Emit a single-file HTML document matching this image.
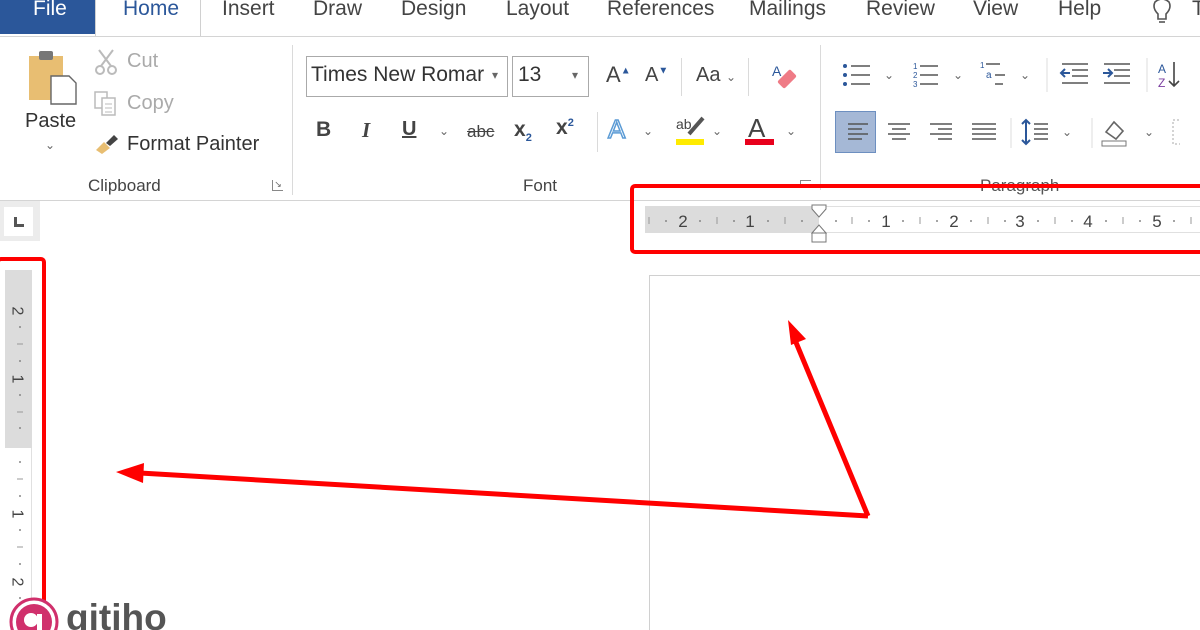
<!DOCTYPE html>
<html><head><meta charset="utf-8">
<style>
*{margin:0;padding:0;box-sizing:border-box}
html{width:1200px;height:630px;overflow:hidden}
body{width:1200px;height:630px;overflow:hidden;background:#fff;font-family:"Liberation Sans",sans-serif;color:#444;position:relative}
.a{position:absolute;white-space:nowrap}
.tab{position:absolute;top:-3px;font-size:21px;color:#444}
.lbl{font-size:20px;color:#333}
.grp{font-size:17px;color:#444}
.dd{font-size:12px;color:#666}
.sep{position:absolute;width:1px;background:#dadada}
.rn{position:absolute;font-size:16px;color:#444}
</style></head><body>
<!-- tab bar -->
<div class="a" style="left:0;top:0;width:103px;height:34px;background:#2b579a"></div>
<div class="a" style="left:33px;top:-3px;font-size:21px;color:#fff">File</div>
<div class="a" style="left:95px;top:-2px;width:106px;height:39px;border:1px solid #d0d0d0;border-bottom:none;background:#fff"></div>
<div class="tab" style="left:123px;color:#2b579a">Home</div>
<div class="tab" style="left:222px">Insert</div>
<div class="tab" style="left:313px">Draw</div>
<div class="tab" style="left:401px">Design</div>
<div class="tab" style="left:506px">Layout</div>
<div class="tab" style="left:607px">References</div>
<div class="tab" style="left:749px">Mailings</div>
<div class="tab" style="left:866px">Review</div>
<div class="tab" style="left:973px">View</div>
<div class="tab" style="left:1058px">Help</div>
<svg class="a" style="left:1150px;top:0" width="24" height="26"><path d="M5 2 Q12 -4 19 2 Q22 8 16 14 L16 19 L8 19 L8 14 Q2 8 5 2Z" fill="none" stroke="#555" stroke-width="1.6"/><line x1="9" y1="22" x2="15" y2="22" stroke="#555" stroke-width="1.6"/></svg>
<div class="a" style="left:1192px;top:-3px;font-size:21px">T</div>
<div class="a" style="left:0;top:36px;width:1200px;height:1px;background:#d4d4d4"></div>

<!-- clipboard -->
<svg class="a" style="left:27px;top:48px" width="54" height="58">
<rect x="2" y="8" width="34" height="44" fill="#e8be72"/><rect x="12" y="3" width="14" height="9" rx="2" fill="#777"/>
<path d="M24 28 h18 l7 7 v21 h-25z" fill="#fff" stroke="#666" stroke-width="1.4"/></svg>
<div class="a lbl" style="left:25px;top:110px">Paste</div>
<div class="a dd" style="left:45px;top:138px">&#8964;</div>
<svg class="a" style="left:93px;top:48px" width="26" height="28"><path d="M6 2 L18 18 M20 2 L8 18" stroke="#bbb" stroke-width="2" fill="none"/><circle cx="7" cy="22" r="4" fill="none" stroke="#bbb" stroke-width="2"/><circle cx="19" cy="22" r="4" fill="none" stroke="#bbb" stroke-width="2"/></svg>
<div class="a lbl" style="left:127px;top:50px;color:#aaa">Cut</div>
<svg class="a" style="left:93px;top:90px" width="26" height="28"><rect x="2" y="2" width="12" height="16" fill="none" stroke="#bbb" stroke-width="1.5"/><rect x="9" y="8" width="13" height="17" fill="#fff" stroke="#bbb" stroke-width="1.5"/><path d="M12 14h7M12 18h7M12 22h7" stroke="#bbb"/></svg>
<div class="a lbl" style="left:127px;top:92px;color:#aaa">Copy</div>
<svg class="a" style="left:94px;top:132px" width="28" height="24"><path d="M2 18 L10 10 L16 16 L8 22Z" fill="#e8be72"/><path d="M12 11 L20 3 L24 7 L16 14Z" fill="#444"/></svg>
<div class="a lbl" style="left:127px;top:133px">Format Painter</div>
<div class="a grp" style="left:88px;top:176px">Clipboard</div>
<div class="a" style="left:272px;top:180px;width:11px;height:11px;border-left:1px solid #888;border-bottom:1px solid #888;font-size:9px;line-height:9px;color:#666;text-align:center">&#8600;</div>
<div class="sep" style="left:292px;top:45px;height:150px"></div>

<!-- font -->
<div class="a" style="left:306px;top:56px;width:202px;height:41px;border:1px solid #aaa"></div>
<div class="a" style="left:311px;top:63px;font-size:21px;color:#333">Times New Romar</div>
<div class="a dd" style="left:492px;top:68px">&#9662;</div>
<div class="a" style="left:512px;top:56px;width:77px;height:41px;border:1px solid #aaa"></div>
<div class="a" style="left:518px;top:63px;font-size:21px;color:#333">13</div>
<div class="a dd" style="left:572px;top:68px">&#9662;</div>
<div class="a" style="left:606px;top:62px;font-size:22px">A<sup style="font-size:10px;color:#2b579a">&#9650;</sup></div>
<div class="a" style="left:645px;top:64px;font-size:20px">A<sup style="font-size:10px;color:#2b579a">&#9660;</sup></div>
<div class="sep" style="left:681px;top:58px;height:38px"></div>
<div class="a" style="left:696px;top:64px;font-size:20px">Aa <span class="dd">&#8964;</span></div>
<div class="sep" style="left:748px;top:58px;height:38px"></div>
<svg class="a" style="left:772px;top:60px" width="32" height="32"><text x="0" y="16" font-size="14" fill="#2b579a" font-family="Liberation Sans">A</text><rect x="10" y="10" width="10" height="18" rx="2" transform="rotate(45 15 19)" fill="#ef7b86"/></svg>
<div class="a" style="left:316px;top:118px;font-size:21px;font-weight:bold;color:#444">B</div>
<div class="a" style="left:362px;top:118px;font-size:21px;font-style:italic;font-family:'Liberation Serif',serif;font-weight:bold">I</div>
<div class="a" style="left:402px;top:118px;font-size:20px;text-decoration:underline;font-weight:bold">U</div>
<div class="a dd" style="left:439px;top:124px">&#8964;</div>
<div class="a" style="left:467px;top:122px;font-size:17px;text-decoration:line-through">abc</div>
<div class="a" style="left:514px;top:118px;font-size:21px;font-weight:bold">x<sub style="font-size:11px;color:#2b579a">2</sub></div>
<div class="a" style="left:556px;top:116px;font-size:21px;font-weight:bold">x<sup style="font-size:11px;color:#2b579a">2</sup></div>
<div class="sep" style="left:597px;top:112px;height:40px"></div>
<div class="a" style="left:608px;top:114px;font-size:26px;color:#fff;-webkit-text-stroke:1.5px #5b9bd5">A</div>
<div class="a dd" style="left:643px;top:124px">&#8964;</div>
<div class="a" style="left:676px;top:116px;font-size:14px">ab</div>
<svg class="a" style="left:685px;top:116px" width="22" height="20"><path d="M4 18 L18 2" stroke="#555" stroke-width="4"/></svg>
<div class="a" style="left:676px;top:139px;width:28px;height:6px;background:#ffeb00"></div>
<div class="a dd" style="left:712px;top:124px">&#8964;</div>
<div class="a" style="left:748px;top:113px;font-size:26px">A</div>
<div class="a" style="left:745px;top:139px;width:29px;height:6px;background:#e8001c"></div>
<div class="a dd" style="left:786px;top:124px">&#8964;</div>
<div class="a grp" style="left:523px;top:176px">Font</div>
<div class="a" style="left:800px;top:180px;width:11px;height:8px;border-left:1px solid #888;border-top:1px solid #888"></div>
<div class="sep" style="left:820px;top:45px;height:145px"></div>

<!-- paragraph -->
<svg class="a" style="left:840px;top:58px" width="340" height="40" font-family="Liberation Sans">
<g fill="#2b579a"><circle cx="5" cy="8" r="2"/><circle cx="5" cy="17" r="2"/><circle cx="5" cy="26" r="2"/></g>
<path d="M11 8h19M11 17h19M11 26h19" stroke="#555" stroke-width="1.6"/>
<text x="44" y="21" font-size="12" fill="#666">&#8964;</text>
<text x="73" y="11" font-size="8" fill="#2b579a">1</text><text x="73" y="20" font-size="8" fill="#2b579a">2</text><text x="73" y="29" font-size="8" fill="#2b579a">3</text>
<path d="M80 8h18M80 17h18M80 26h18" stroke="#555" stroke-width="1.6"/>
<text x="113" y="21" font-size="12" fill="#666">&#8964;</text>
<text x="140" y="10" font-size="8" fill="#2b579a">1</text><text x="146" y="20" font-size="10" fill="#2b579a">a</text>
<path d="M146 6h14M155 17h10M155 26h8" stroke="#555" stroke-width="1.6"/>
<text x="180" y="21" font-size="12" fill="#666">&#8964;</text>
<line x1="207" y1="0" x2="207" y2="34" stroke="#ddd"/>
<path d="M222 6h26M232 12h16M232 18h16M222 25h26" stroke="#555" stroke-width="1.5"/><path d="M230 15h-9m4-4l-4 4 4 4" stroke="#2b579a" stroke-width="2" fill="none"/>
<path d="M264 6h26M274 12h16M274 18h16M264 25h26" stroke="#555" stroke-width="1.5"/><path d="M263 15h9m-4-4l4 4-4 4" stroke="#2b579a" stroke-width="2" fill="none"/>
<line x1="307" y1="0" x2="307" y2="34" stroke="#ddd"/>
<text x="318" y="15" font-size="12" fill="#2b579a">A</text><text x="318" y="29" font-size="12" fill="#7b3fa0">Z</text><path d="M334 4v24m-5-5l5 5 5-5" stroke="#444" stroke-width="1.6" fill="none"/>
</svg>
<div class="a" style="left:835px;top:111px;width:41px;height:42px;background:#a5b8d6;border:1px solid #6d8fc0"></div>
<svg class="a" style="left:840px;top:118px" width="340" height="32">
<path d="M8 6h20M8 11h14M8 16h20M8 21h14" stroke="#555" stroke-width="1.5"/>
<path d="M48 6h22M52 11h14M48 16h22M52 21h14" stroke="#555" stroke-width="1.5"/>
<path d="M90 6h22M98 11h14M90 16h22M98 21h14" stroke="#555" stroke-width="1.5"/>
<path d="M132 6h24M132 11h24M132 16h24M132 21h24" stroke="#555" stroke-width="1.5"/>
<line x1="171" y1="-4" x2="171" y2="30" stroke="#ddd"/>
<path d="M186 2v24M182 6l4-4 4 4M182 22l4 4 4-4" stroke="#2b579a" stroke-width="2" fill="none"/>
<path d="M194 6h14M194 11h14M194 16h14M194 21h14" stroke="#555" stroke-width="1.5"/>
<text x="222" y="18" font-size="12" fill="#666" font-family="Liberation Sans">&#8964;</text>
<line x1="252" y1="-4" x2="252" y2="30" stroke="#ddd"/>
<path d="M266 14l8-10 9 9-7 8z" fill="none" stroke="#666" stroke-width="1.6"/><rect x="262" y="23" width="24" height="5" fill="#fff" stroke="#777"/>
<text x="304" y="18" font-size="12" fill="#666" font-family="Liberation Sans">&#8964;</text>
<rect x="333" y="2" width="24" height="24" fill="none" stroke="#aaa" stroke-dasharray="2 2"/>
</svg>
<div class="a grp" style="left:980px;top:176px;color:#555">Paragraph</div>
<div class="a" style="left:0;top:200px;width:1200px;height:1px;background:#d4d4d4"></div>

<!-- tab selector -->
<div class="a" style="left:0;top:201px;width:40px;height:40px;background:#ececec"></div>
<div class="a" style="left:4px;top:207px;width:29px;height:29px;background:#fff"></div>
<div class="a" style="left:14px;top:217px;width:3px;height:10px;background:#555"></div>
<div class="a" style="left:14px;top:224px;width:10px;height:3px;background:#555"></div>

<!-- horizontal ruler -->
<div class="a" style="left:645px;top:206px;width:555px;height:27px;background:#fff;border-top:1px solid #e0e0e0;border-bottom:1px solid #e0e0e0"></div>
<div class="a" style="left:645px;top:206px;width:174px;height:27px;background:#dcdcdc"></div>
<svg class="a" style="left:640px;top:204px" width="560" height="40" font-family="Liberation Sans">
<g font-size="17" fill="#444" text-anchor="middle"><text x="43" y="23">2</text><text x="110" y="23">1</text><text x="246" y="23">1</text><text x="314" y="23">2</text><text x="380" y="23">3</text><text x="448" y="23">4</text><text x="517" y="23">5</text></g>
<g fill="#888"><circle cx="26" cy="17" r="1"/><circle cx="60" cy="17" r="1"/><circle cx="94" cy="17" r="1"/><circle cx="128" cy="17" r="1"/><circle cx="162" cy="17" r="1"/><circle cx="196" cy="17" r="1"/><circle cx="229" cy="17" r="1"/><circle cx="263" cy="17" r="1"/><circle cx="297" cy="17" r="1"/><circle cx="331" cy="17" r="1"/><circle cx="365" cy="17" r="1"/><circle cx="398" cy="17" r="1"/><circle cx="432" cy="17" r="1"/><circle cx="466" cy="17" r="1"/><circle cx="500" cy="17" r="1"/><circle cx="534" cy="17" r="1"/></g>
<path d="M9 13v7M77 13v7M145 13v7M212 13v7M280 13v7M348 13v7M415 13v7M483 13v7M551 13v7" stroke="#999"/>
<path d="M172 1h14v4l-7 8-7-8z M172 29l7-8 7 8v0z" fill="#fff" stroke="#777"/>
<rect x="172" y="29" width="14" height="9" fill="#fff" stroke="#777"/>
</svg>
<div class="a" style="left:630px;top:184px;width:600px;height:70px;border:4px solid #f00;border-radius:5px"></div>

<!-- vertical ruler -->
<div class="a" style="left:5px;top:270px;width:27px;height:360px;background:#fff;border-right:1px solid #e0e0e0"></div>
<div class="a" style="left:5px;top:270px;width:27px;height:178px;background:#dcdcdc"></div>
<div class="rn" style="left:12px;top:302px;transform:rotate(90deg)">2</div>
<div class="rn" style="left:12px;top:370px;transform:rotate(90deg)">1</div>
<div class="rn" style="left:12px;top:505px;transform:rotate(90deg)">1</div>
<div class="rn" style="left:12px;top:573px;transform:rotate(90deg)">2</div>
<svg class="a" style="left:5px;top:270px" width="27" height="360"><g fill="#888"><circle cx="15" cy="57" r="1"/><circle cx="15" cy="91" r="1"/><circle cx="15" cy="125" r="1"/><circle cx="15" cy="158" r="1"/><circle cx="15" cy="192" r="1"/><circle cx="15" cy="226" r="1"/><circle cx="15" cy="260" r="1"/><circle cx="15" cy="294" r="1"/><circle cx="15" cy="328" r="1"/></g><path d="M12 74h6M12 142h6M12 209h6M12 277h6" stroke="#999"/></svg>
<div class="a" style="left:-4px;top:257px;width:50px;height:400px;border:4px solid #f00;border-radius:5px"></div>

<!-- page -->
<div class="a" style="left:649px;top:275px;width:551px;height:355px;border-left:1px solid #d0d0d0;border-top:1px solid #d0d0d0"></div>

<!-- arrows -->
<svg class="a" style="left:0;top:0" width="1200" height="630">
<path d="M868 516 L795 340" stroke="#f00" stroke-width="5" fill="none" stroke-linejoin="round"/>
<path d="M868 516 L140 473" stroke="#f00" stroke-width="5" fill="none"/>
<path d="M788 320 L806 339 L791 345Z" fill="#f00"/>
<path d="M116 472 L144 463 L143 483Z" fill="#f00"/>
</svg>

<!-- logo -->
<svg class="a" style="left:8px;top:596px" width="56" height="34"><circle cx="26" cy="26" r="23" fill="#fff" stroke="#d0306c" stroke-width="3"/><circle cx="26" cy="26" r="18" fill="#d0306c"/><circle cx="23" cy="24" r="7" fill="#fff"/><rect x="29" y="18" width="5" height="18" fill="#fff"/></svg>
<div class="a" style="left:66px;top:599px;font-size:37px;line-height:1;color:#555;font-weight:bold">gitiho</div>
</body></html>
